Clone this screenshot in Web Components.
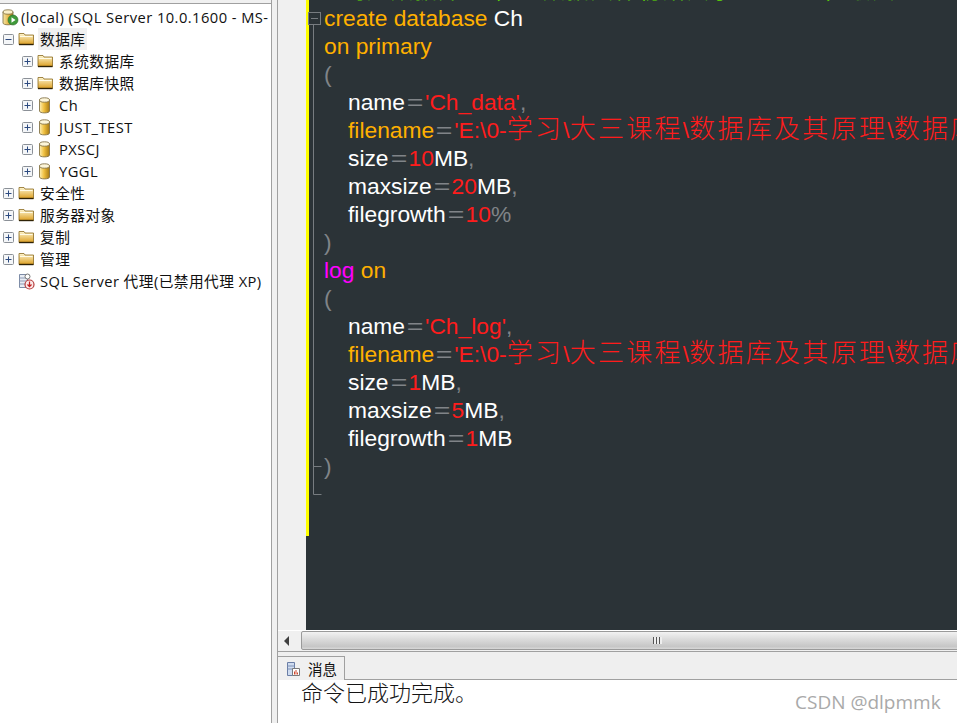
<!DOCTYPE html>
<html lang="zh">
<head>
<meta charset="utf-8">
<title>SQL Server Management Studio</title>
<style>
  html, body { margin: 0; height: 100%; background: #fff; overflow: hidden; }
</style>
</head>
<body>
<ssms-window>
  <object-tree slot="tree">
    <tree-node level="0" root icon="server" label="(local) (SQL Server 10.0.1600 - MS-"></tree-node>
    <tree-node level="0" toggle="minus" icon="folder" label="数据库" selected></tree-node>
    <tree-node level="1" toggle="plus" icon="folder" label="系统数据库"></tree-node>
    <tree-node level="1" toggle="plus" icon="folder" label="数据库快照"></tree-node>
    <tree-node level="1" toggle="plus" icon="db" label="Ch"></tree-node>
    <tree-node level="1" toggle="plus" icon="db" label="JUST_TEST"></tree-node>
    <tree-node level="1" toggle="plus" icon="db" label="PXSCJ"></tree-node>
    <tree-node level="1" toggle="plus" icon="db" label="YGGL"></tree-node>
    <tree-node level="0" toggle="plus" icon="folder" label="安全性"></tree-node>
    <tree-node level="0" toggle="plus" icon="folder" label="服务器对象"></tree-node>
    <tree-node level="0" toggle="plus" icon="folder" label="复制"></tree-node>
    <tree-node level="0" toggle="plus" icon="folder" label="管理"></tree-node>
    <tree-node level="0" icon="agent" label="SQL Server 代理(已禁用代理 XP)"></tree-node>
  </object-tree>
  <code-editor slot="editor"></code-editor>
  <h-scrollbar slot="scroll"></h-scrollbar>
  <message-pane slot="messages" tab="消息">命令已成功完成。</message-pane>
</ssms-window>
<water-mark>CSDN @dlpmmk</water-mark>

<script>
const CJK = '"Noto Sans CJK SC"';

class SsmsWindow extends HTMLElement {
  constructor() {
    super();
    this.attachShadow({mode: 'open'});
    this.shadowRoot.innerHTML = `
    <style>
      :host { display: grid; grid-template-columns: 272px 6px 679px; width: 957px; height: 723px; overflow: hidden; }
      .left { border-right: 1px solid #a0a0a0; overflow: hidden; min-width: 0; }
      .split { background: #f0f0f0; }
      .right { display: flex; flex-direction: column; min-width: 0; border-left: 1px solid #a0a0a0; margin-left: -1px; }
    </style>
    <div class="left"><slot name="tree"></slot></div>
    <div class="split"></div>
    <div class="right">
      <slot name="editor"></slot>
      <slot name="scroll"></slot>
      <slot name="messages"></slot>
    </div>`;
  }
}

class ObjectTree extends HTMLElement {
  constructor() {
    super();
    this.attachShadow({mode: 'open'});
    this.shadowRoot.innerHTML = `
    <style>
      :host { display: block; height: 723px; box-sizing: border-box; padding-top: 6px; background: #fff;
        overflow: hidden; position: relative; }
      .top { position: absolute; left: 0; right: 0; top: 0; height: 3px; background: #f0f0f0; border-bottom: 1px solid #a0a0a0; }
    </style>
    <div class="top"></div>
    <slot></slot>`;
  }
}

const ICONS = {
  folder: `<svg width="16" height="16" viewBox="0 0 16 16"><defs><linearGradient id="f" x1="0" y1="0" x2="0" y2="1"><stop offset="0" stop-color="#fef6d0"/><stop offset="1" stop-color="#dc9f22"/></linearGradient></defs><path d="M1 2.500h5l1 1.500h8.500v9.500H1z" fill="url(#f)" stroke="#8a6a20" stroke-width=".8"/><path d="M1 13.500h14.500" stroke="#2e2206" stroke-width="1.400"/><path d="M2 5.500h12.500" stroke="#fffbe6"/></svg>`,
  db: `<svg width="15" height="17" viewBox="0 0 15 17"><defs><linearGradient id="d" x1="0" y1="0" x2="1" y2="0"><stop offset="0" stop-color="#fdf0b8"/><stop offset=".45" stop-color="#f0c040"/><stop offset="1" stop-color="#a87a12"/></linearGradient></defs><path d="M2.500 3v11c0 1.200 2.200 1.900 5 1.900s5-.7 5-1.900V3z" fill="url(#d)" stroke="#84744a" stroke-width=".9"/><ellipse cx="7.500" cy="3" rx="5" ry="2.200" fill="#fdf6da" stroke="#84744a" stroke-width=".9"/></svg>`,
  server: `<svg width="17" height="17" viewBox="0 0 17 17"><defs><linearGradient id="s" x1="0" y1="0" x2="1" y2="0"><stop offset="0" stop-color="#f6e6a8"/><stop offset=".6" stop-color="#e4b23c"/><stop offset="1" stop-color="#a87c1c"/></linearGradient></defs><path d="M1 3v11c0 1.100 2.200 1.800 5 1.800s5-.7 5-1.800V3z" fill="url(#s)" stroke="#7a6a3a" stroke-width=".8"/><ellipse cx="6" cy="3" rx="5" ry="2.200" fill="#fbf0c8" stroke="#7a6a3a" stroke-width=".8"/><circle cx="11" cy="11" r="5" fill="#3f9a3a" stroke="#2c6a2a" stroke-width=".6"/><path d="M9.500 8.300l4 2.700-4 2.700z" fill="#fff"/></svg>`,
  agent: `<svg width="17" height="17" viewBox="0 0 17 17"><path d="M1.500 1.500h8v13h-8z" fill="#e8ecf4" stroke="#7c8ba6"/><path d="M1.500 5h8M1.500 8h8M1.500 11h8" stroke="#8c9ab4"/><circle cx="9.500" cy="3.500" r="2.500" fill="#fff" stroke="#777"/><circle cx="11.500" cy="11.500" r="4.500" fill="#fbe8e8" stroke="#b43c3c" stroke-width="1.200"/><path d="M11.500 8.500v4.500M9.500 11.500l2 2.200 2-2.200" fill="none" stroke="#c02020" stroke-width="1.200"/></svg>`
};

class TreeNode extends HTMLElement {
  constructor() {
    super();
    this.attachShadow({mode: 'open'});
  }

  connectedCallback() {
    const toggle = this.getAttribute('toggle');
    const icon = ICONS[this.getAttribute('icon')];
    this.style.setProperty('--level', this.getAttribute('level'));
    const mark = toggle ? `<svg width="11" height="11" viewBox="0 0 11 11"><rect x=".5" y=".5" width="10" height="10" rx="1" fill="#f4f6f8" stroke="#8b9097"/><path d="M2.500 5.500h6${toggle === 'plus' ? 'M5.500 2.500v6' : ''}" stroke="#2c4a80"/></svg>` : '';
    this.shadowRoot.innerHTML = `
    <style>
      :host { display: flex; align-items: center; height: 22px; white-space: nowrap;
        padding-left: calc(var(--level) * 19px + 3px);
        font: 14.700px "Open Sans", ${CJK}, sans-serif; color: #101010; }
      :host([root]) { padding-left: 2px; }
      :host([root]) .toggle { display: none; }
      :host([root]) .icon { width: 17px; }
      .toggle { width: 15px; flex: none; display: flex; align-items: center; }
      .icon { width: 20px; flex: none; display: flex; align-items: center; }
      .label { padding: 0 2px; line-height: 22px; letter-spacing: .45px; }
      :host([selected]) .label { background: #f0f0f0; }
    </style>
    <span class="toggle">${mark}</span>
    <span class="icon">${icon}</span>
    <span class="label">${this.getAttribute('label')}</span>`;
  }
}

class CodeEditor extends HTMLElement {
  constructor() {
    super();
    this.attachShadow({mode: 'open'});
    const eq = '<i class="g eq">=</i>';
    const zh = s => `<span class="zh">${s}</span>`;
    const file = `<b class="o">filename</b>${eq}<b class="r">'E:\\0-${zh('学习')}\\${zh('大三课程')}\\${zh('数据库及其原理')}\\${zh('数据库')}</b>`;
    const lines = [
      [0, '<b class="c">--创建数据库Ch，主数据文件初始大小为10MB，最大为20MB，增长率为10%；日志文件初始大小为1MB</b>'],
      [0, '<b class="o">create database</b> Ch'],
      [0, '<b class="o">on primary</b>'],
      [0, '<i class="g">(</i>'],
      [1, `name${eq}<b class="r">'Ch_data'</b><i class="g">,</i>`],
      [1, file],
      [1, `size${eq}<b class="r">10</b>MB<i class="g">,</i>`],
      [1, `maxsize${eq}<b class="r">20</b>MB<i class="g">,</i>`],
      [1, `filegrowth${eq}<b class="r">10</b><i class="g">%</i>`],
      [0, '<i class="g">)</i>'],
      [0, '<b class="m">log</b> <b class="o">on</b>'],
      [0, '<i class="g">(</i>'],
      [1, `name${eq}<b class="r">'Ch_log'</b><i class="g">,</i>`],
      [1, file],
      [1, `size${eq}<b class="r">1</b>MB<i class="g">,</i>`],
      [1, `maxsize${eq}<b class="r">5</b>MB<i class="g">,</i>`],
      [1, `filegrowth${eq}<b class="r">1</b>MB`],
      [0, '<i class="g">)</i>']
    ];
    this.shadowRoot.innerHTML = `
    <style>
      :host { display: block; height: 630px; overflow: hidden; background: #f0f0f0; padding-left: 28px; box-sizing: border-box; }
      .pane { position: relative; height: 100%; background: #2b3337; overflow: hidden; padding-left: 18px;
        font: 22.800px "Liberation Sans", ${CJK}, sans-serif; color: #fff; }
      .code { margin-top: -24px; }
      .line { height: 28px; line-height: 28px; white-space: nowrap; }
      .line.in { padding-left: 24px; }
      b, i { font-weight: 400; font-style: normal; }
      .o { color: #ffb000; }
      .r { color: #ff1c1c; }
      .g { color: #808488; }
      .m { color: #ff00ff; }
      .c { color: #60e000; font-size: 22px; letter-spacing: 2px; }
      .zh { font-size: 26px; font-weight: 300; letter-spacing: 2.300px; line-height: 1; }
      .eq { display: inline-block; width: 20px; text-align: center; transform: scaleX(1.250); }
      .bar { position: absolute; left: 0; top: 0; width: 3px; height: 536px; background: #ff0; }
      .fold { position: absolute; left: 0; top: 0; }
    </style>
    <div class="pane">
      <div class="bar"></div>
      <svg class="fold" width="20" height="500" viewBox="0 0 20 500">
        <path d="M7.500 24.500V494.500H15.500M7.500 466.500H15.500" fill="none" stroke="#777c80"/>
        <rect x="2.500" y="12.500" width="12" height="12" fill="#2b3337" stroke="#777c80"/>
        <path d="M5 18.500h7" stroke="#777c80"/>
      </svg>
      <div class="code">${lines.map(([indent, html]) => `<div class="line${indent ? ' in' : ''}">${html}</div>`).join('')}</div>
    </div>`;
  }
}

class HScrollbar extends HTMLElement {
  constructor() {
    super();
    this.attachShadow({mode: 'open'});
    this.shadowRoot.innerHTML = `
    <style>
      :host { display: flex; align-items: stretch; height: 22px; box-sizing: border-box; background: #f0f0f0; overflow: hidden;
        border-top: 1px solid #fff; border-bottom: 1px solid #a0a0a0; }
      .btn { width: 23px; flex: none; display: flex; align-items: center; justify-content: center; padding-right: 6px; box-sizing: border-box; }
      .arrow { width: 0; height: 0; border: 5px solid transparent; border-right: 5px solid #404040; border-left: 0; }
      .thumb { flex: none; width: 712px; box-sizing: border-box; display: flex; align-items: center; justify-content: center; margin-bottom: 1px;
        border: 1px solid #9a9a9a; border-radius: 2px;
        background: linear-gradient(#f2f2f2, #dadada 45%, #c6c6c6 85%, #d8d8d8); }
      .grip { width: 9px; height: 7px; background: repeating-linear-gradient(90deg, #555 0 1px, #eee 1px 3px); }
    </style>
    <div class="btn"><div class="arrow"></div></div>
    <div class="thumb"><div class="grip"></div></div>`;
  }
}

class MessagePane extends HTMLElement {
  constructor() {
    super();
    this.attachShadow({mode: 'open'});
  }

  connectedCallback() {
    this.shadowRoot.innerHTML = `
    <style>
      :host { display: flex; flex-direction: column; flex: 1; background: #fff; min-height: 71px; }
      .strip { height: 28px; box-sizing: border-box; background: #efefef; border-bottom: 1px solid #a0a0a0; padding-top: 4px; display: flex; align-items: stretch; }
      .tab { width: 67px; box-sizing: border-box; margin-bottom: -1px; background: #f0f0f0; border: 1px solid #a0a0a0; border-left: 0; border-bottom: 0;
        display: flex; align-items: center; gap: 7px; padding-left: 8px; font: 14.500px/16px ${CJK}, sans-serif; color: #111; }
      .body { padding-left: 23px; font: 22px/22px ${CJK}, serif; font-weight: 300; color: #141414; }
    </style>
    <div class="strip">
      <div class="tab">
        <svg width="15" height="16" viewBox="0 0 15 16"><path d="M1.500 1.500h7v13h-7z" fill="#cfdcf0" stroke="#6a7ea6"/><path d="M1.500 5h7M1.500 8h7" stroke="#7f92b6"/><path d="M6.500 7.500h7v7h-7z" fill="#fff" stroke="#7a7a7a"/><path d="M8.500 13.500v-3M10 13.500v-4.500M11.500 13.500v-2" stroke="#d04a30"/></svg>
        <span>${this.getAttribute('tab')}</span>
      </div>
    </div>
    <div class="body"><slot></slot></div>`;
  }
}

class WaterMark extends HTMLElement {
  constructor() {
    super();
    this.attachShadow({mode: 'open'});
    this.shadowRoot.innerHTML = `
    <style>
      :host { position: absolute; left: 795px; top: 689px; font: 19px/26px "Open Sans", sans-serif; color: #a9a9a9; white-space: nowrap; }
    </style>
    <slot></slot>`;
  }
}

customElements.define('ssms-window', SsmsWindow);
customElements.define('object-tree', ObjectTree);
customElements.define('tree-node', TreeNode);
customElements.define('code-editor', CodeEditor);
customElements.define('h-scrollbar', HScrollbar);
customElements.define('message-pane', MessagePane);
customElements.define('water-mark', WaterMark);
</script>
</body>
</html>
